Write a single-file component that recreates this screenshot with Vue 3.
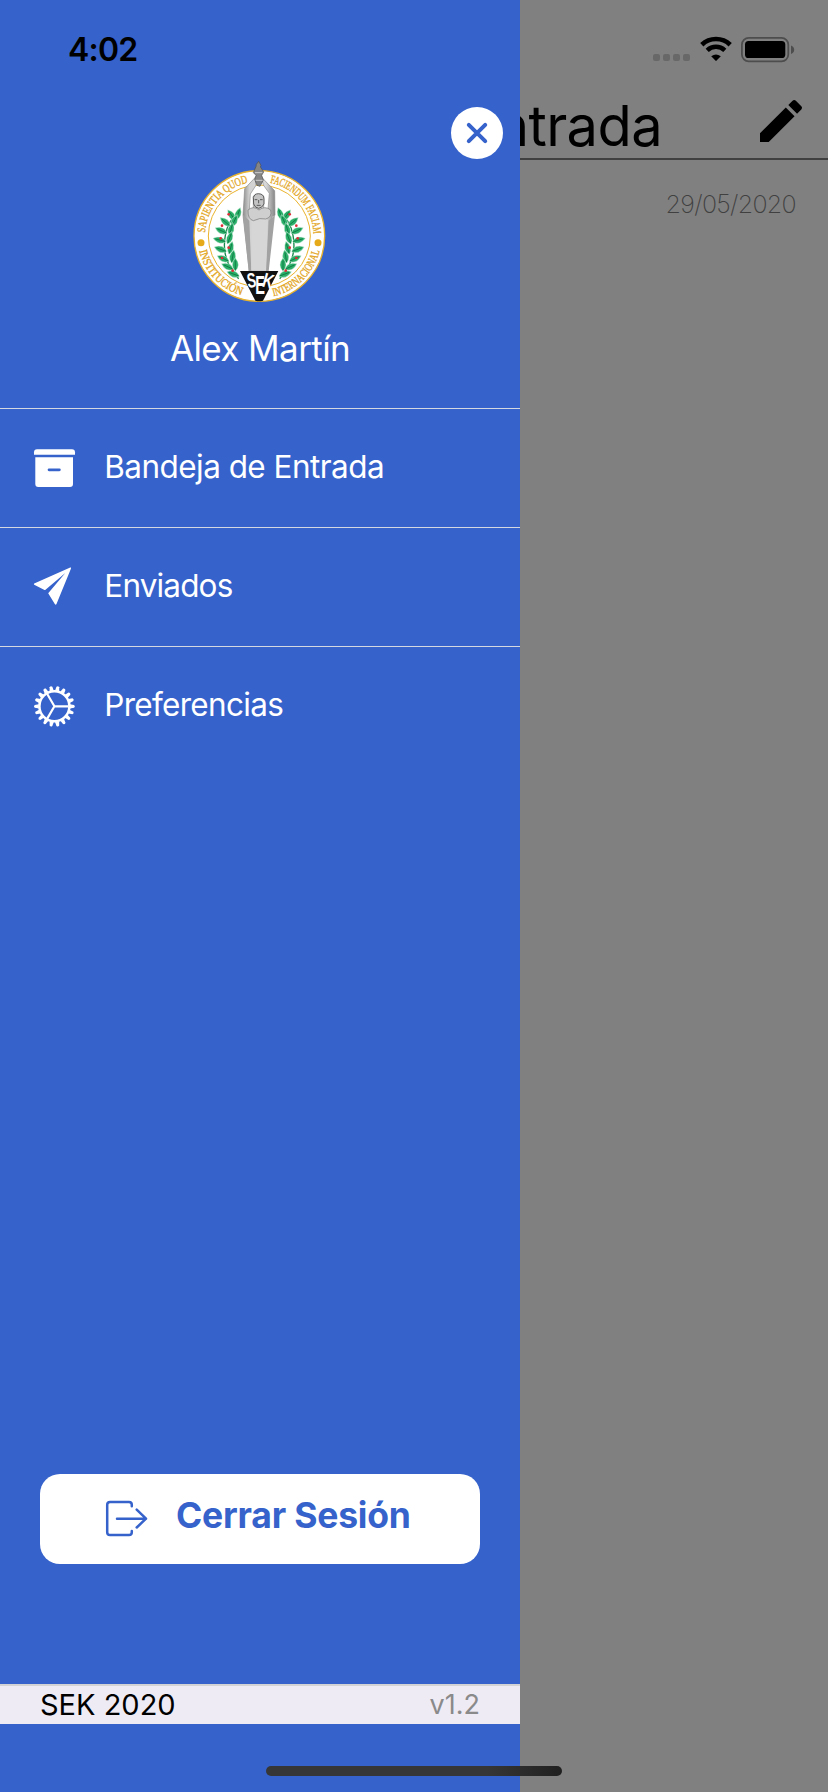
<script setup>
const menu = [
  { id: 'inbox', label: 'Bandeja de Entrada' },
  { id: 'sent', label: 'Enviados' },
  { id: 'settings', label: 'Preferencias' },
]
const teeth = Array.from({ length: 18 }, (_, i) => i * 20)
const leaves = [
  [155, 196, -35], [174, 192, 20], [136, 216, -50], [163, 213, 25], [124, 242, -65], [153, 238, 15],
  [119, 270, -75], [149, 264, 20], [122, 298, -70], [152, 294, 15], [130, 326, -65], [158, 320, 10],
  [143, 350, -65], [166, 344, 0], [160, 372, -70],
]
const berries = [[146, 193], [126, 227], [122, 265], [146, 293], [126, 324], [158, 362]]
</script>

<template>
  <div class="screen">
    <main class="page">
      <div class="status">
        <div class="signal"><i v-for="n in 4" :key="n"></i></div>
        <svg class="wifi" width="32" height="25" viewBox="0 0 32 25">
          <path d="M1.8 7.7 A20.5 20.5 0 0 1 30.2 7.7" fill="none" stroke="#000" stroke-width="4.7" />
          <path d="M7.2 13.4 A12.7 12.7 0 0 1 24.8 13.4" fill="none" stroke="#000" stroke-width="4.5" />
          <path d="M11.2 19.2 Q16 15.6 20.8 19.2 L16.6 23.6 Q16 24.2 15.4 23.6 Z" />
        </svg>
        <svg class="battery" width="54" height="26" viewBox="0 0 54 26">
          <rect x="0.9" y="0.9" width="46.4" height="23.4" rx="6.8" fill="none" stroke="#4d4d4d" stroke-width="1.8" />
          <rect x="4" y="4" width="40.3" height="17" rx="3.6" />
          <path d="M50 8.4 Q53.2 9.7 53.2 12.7 Q53.2 15.7 50 17 Z" fill="#4d4d4d" />
        </svg>
      </div>
      <header class="bar">
        <h1>Bandeja de Entrada</h1>
        <svg class="pencil" width="56" height="56" viewBox="0 0 24 24">
          <path d="M3 17.25V21h3.75L17.81 9.94l-3.75-3.75L3 17.25zM20.71 7.04c.39-.39.39-1.02 0-1.41l-2.34-2.34c-.39-.39-1.02-.39-1.41 0l-1.83 1.83 3.75 3.75 1.83-1.83z" />
        </svg>
      </header>
      <div class="date">29/05/2020</div>
    </main>

    <aside class="drawer">
      <div class="time">4:02</div>
      <button class="close" aria-label="Cerrar">
        <svg width="52" height="52" viewBox="0 0 52 52">
          <path d="M17.8 17.8 L34.2 34.2 M34.2 17.8 L17.8 34.2" stroke="#3562cb" stroke-width="4" stroke-linecap="round" />
        </svg>
      </button>

      <svg class="crest" width="160" height="160" viewBox="0 0 480 480">
        <defs>
          <path id="arc-top" d="M75 258 A163 163 0 0 1 401 258" />
          <path id="arc-bottom" d="M52 258 A186 186 0 0 0 424 258" />
          <linearGradient id="stone" x1="0" x2="1">
            <stop offset="0" stop-color="#8c8c8c" />
            <stop offset="0.2" stop-color="#d2d2d2" />
            <stop offset="0.72" stop-color="#d8d8d8" />
            <stop offset="1" stop-color="#858585" />
          </linearGradient>
          <g id="laurel">
            <path d="M176 386 Q122 330 136 256 Q144 210 180 184" fill="none" stroke="#14894b" stroke-width="4" />
            <g v-for="(l, i) in leaves" :key="i" :transform="`translate(${l[0]} ${l[1]}) rotate(${l[2]}) scale(1.3)`">
              <path d="M0 15 Q-14 2 0 -16 Q14 2 0 15Z" fill="#2aae68" stroke="#e8f5ec" stroke-width="1" />
              <path d="M0 13 V-10" stroke="#0f7a44" stroke-width="2" />
            </g>
            <circle v-for="(b, i) in berries" :key="'b' + i" :cx="b[0]" :cy="b[1]" r="4" fill="#e02a35" />
          </g>
        </defs>
        <circle cx="238" cy="258" r="196" fill="#fff" stroke="#eab32c" stroke-width="4" />
        <circle cx="238" cy="258" r="153" fill="none" stroke="#eab32c" stroke-width="3" />
        <g class="motto">
          <text><textPath href="#arc-top" startOffset="10" textLength="212" lengthAdjust="spacingAndGlyphs">SAPIENTIA QUOD</textPath></text>
          <text><textPath href="#arc-top" startOffset="288" textLength="218" lengthAdjust="spacingAndGlyphs">FACIENDUM FACIAM</textPath></text>
          <text><textPath href="#arc-bottom" startOffset="45" textLength="192" lengthAdjust="spacingAndGlyphs">INSTITUCIÓN</textPath></text>
          <text><textPath href="#arc-bottom" startOffset="335" textLength="204" lengthAdjust="spacingAndGlyphs">INTERNACIONAL</textPath></text>
        </g>
        <circle cx="63" cy="278" r="10.5" fill="#e6aa18" />
        <circle cx="414" cy="278" r="10.5" fill="#e6aa18" />
        <use href="#laurel" />
        <use href="#laurel" transform="translate(475 0) scale(-1 1)" />
        <path d="M226 82 L194 116 L189 196 L208 364 H262 L275 200 L285 196 L284 122 L245 82 L250 105 L268 130 L264 178 L251 180 L251 138 L220 138 L220 180 L208 178 L211 132 L228 106Z" fill="url(#stone)" stroke="#8a8a8a" stroke-width="2" />
        <path d="M189 194 L208 212 L214 364 H206 Z M285 194 L266 212 L258 364 H266 Z" fill="#a2a2a2" />
        <path d="M214 210 Q238 220 264 210 L257 360 H214Z" fill="#d6d6d6" />
        <path d="M204 180 Q220 166 237 180 Q255 166 272 180 Q277 202 257 207 Q240 202 220 212 Q203 208 204 180Z" fill="#cfcfcf" stroke="#747474" stroke-width="2" />
        <path d="M220 142 Q222 131 236 131 Q252 132 252 147 V162 Q246 174 236 175 Q225 174 221 162Z" fill="#c4c4c4" stroke="#444" stroke-width="2.5" />
        <path d="M224 149 h8 M240 149 h8 M236 150 v10 M230 166 h12" stroke="#444" stroke-width="2.5" />
        <path d="M220 68 L226 54 Q229 50 229 43 L236 34 L243 46 Q238 50 246 58 L251 66 L245 76 L250 90 L240 109 L231 106 L224 88 L228 76Z" fill="#858585" stroke="#505050" stroke-width="2" />
        <path d="M225 68 H247 M227 91 H248" stroke="#ccc" stroke-width="3" />
        <path d="M180 363 H295 L249 452 Q237 455 226 452Z" fill="#111" />
        <g class="mark">
          <text x="201" y="413" textLength="27" lengthAdjust="spacingAndGlyphs" transform="rotate(-8 212 390)">S</text>
          <text x="226" y="431" class="tall" textLength="29" lengthAdjust="spacingAndGlyphs">E</text>
          <text x="249" y="413" textLength="32" lengthAdjust="spacingAndGlyphs" transform="rotate(16 260 392)">K</text>
        </g>
      </svg>

      <div class="name">Alex Martín</div>

      <nav>
        <a v-for="item in menu" :key="item.id" class="item">
          <svg width="42" height="42" viewBox="0 0 42 42">
            <g v-if="item.id === 'inbox'" fill="#fff">
              <path d="M1 7.7 V5.2 Q1 2.3 4 2.3 H39 Q42 2.3 42 5.2 V7.7Z" />
              <path fill-rule="evenodd" d="M2.3 10.2 H40 V37 Q40 40 37 40 H5.3 Q2.3 40 2.3 37Z M16 21.5 a1.3 1.3 0 0 0 0 2.7 h10.4 a1.3 1.3 0 0 0 0 -2.7Z" />
            </g>
            <g v-else-if="item.id === 'sent'" fill="#fff">
              <path d="M1.2 17.5 L37.2 1.6 Q38.5 1.1 37.9 2.7 L23.5 38 Q22.7 39.4 21.8 38 L15.2 27.2 L32.3 7.1 L12.5 23.8 Q11.8 24.2 11 23.8 L1.2 18.7 Q0.4 18 1.2 17.5Z" />
            </g>
            <g v-else transform="translate(21.4 21.3)" stroke="#fff" fill="none">
              <circle r="15" stroke-width="2.5" />
              <path v-for="a in teeth" :key="a" :transform="`rotate(${a})`" d="M15.5 -2.1 L19.7 -1.4 Q21.2 0 19.7 1.4 L15.5 2.1Z" fill="#fff" stroke="none" />
              <path d="M0 0 H14 M0 0 L-7.3 -12.6 M0 0 L-7.3 12.6" stroke-width="2.2" />
            </g>
          </svg>
          <span :class="item.id">{{ item.label }}</span>
        </a>
      </nav>

      <button class="logout">
        <svg width="44" height="38" viewBox="0 0 44 38" fill="none" stroke="#3562cb" stroke-width="2.5" stroke-linecap="round" stroke-linejoin="round">
          <path d="M26.8 6.3 V4.8 Q26.8 2 24 2 H5 Q2.2 2 2.2 4.8 V32.2 Q2.2 35 5 35 H24 Q26.8 35 26.8 32.2 V31" />
          <path d="M12 18.7 H41 M31.7 9.6 L41 18.7 L31.7 27.5" />
        </svg>
        <span>Cerrar Sesión</span>
      </button>

      <footer>
        <span class="brand">SEK 2020</span>
        <span class="version">v1.2</span>
      </footer>
    </aside>
    <div class="home"></div>
  </div>
</template>

<style>
html, body { margin: 0; background: #808080; }
</style>

<style scoped>
.screen { position: relative; width: 828px; height: 1792px; overflow: hidden; background: #808080; font-family: Inter, "Liberation Sans", sans-serif; color: #000; }
.screen * { box-sizing: border-box; }
svg { display: block; flex: none; overflow: visible; }
.status { height: 88px; padding: 37px 33px 0 0; display: flex; justify-content: flex-end; align-items: flex-start; }
.signal { display: flex; gap: 3px; margin: 17px 9.5px 0 0; }
.signal i { width: 7px; height: 7px; border-radius: 2px; background: #686868; }
.wifi { margin-right: 9.5px; }
.bar { height: 72px; border-bottom: 2px solid #404040; display: flex; align-items: flex-start; justify-content: flex-end; padding: 5px 19px 0 0; }
h1 { margin: 0 91px 0 0; font-size: 56px; line-height: 66px; font-weight: 400; letter-spacing: -0.6px; white-space: nowrap; }
.date { padding: 29px 32px 0 0; text-align: right; font-size: 25px; line-height: 31px; font-weight: 200; color: #404040; letter-spacing: -0.7px; }
.drawer { position: absolute; left: 0; top: 0; width: 520px; height: 1792px; background: #3562cb; display: flex; flex-direction: column; }
.time { height: 107px; padding: 30px 0 0 68px; font-size: 32px; line-height: 40px; font-weight: 600; letter-spacing: -0.8px; }
button { border: 0; padding: 0; font: inherit; }
.close { align-self: flex-end; margin-right: 17px; width: 52px; height: 52px; border-radius: 50%; background: #fff; }
.crest { margin: -9px 0 0 180px; }
.motto { font-family: "Liberation Serif", serif; font-size: 35px; fill: #e3a51c; stroke: #e3a51c; stroke-width: 1px; }
.mark { font-family: "Liberation Sans", sans-serif; font-weight: 700; font-size: 62px; fill: #fff; }
.mark .tall { font-size: 76px; }
.name { height: 98px; padding-top: 18px; text-align: center; font-size: 35px; line-height: 40px; color: #fff; letter-spacing: -0.6px; }
.item { display: flex; align-items: flex-start; height: 119px; border-top: 1px solid #d4d8e0; padding: 38px 0 0 33px; color: #fff; font-size: 31.5px; }
.item span { line-height: 40px; margin-left: 29.3px; white-space: nowrap; }
.item .inbox { letter-spacing: -0.55px; }
.item .sent { letter-spacing: -0.85px; }
.item .settings { letter-spacing: -0.7px; }
.logout { margin: 709px 40px 0; height: 90px; flex: none; border-radius: 20px; background: #fff; color: #3562cb; display: flex; align-items: flex-start; padding: 26px 0 0 65px; }
.logout span { margin-left: 27px; font-size: 35.5px; line-height: 32px; font-weight: 700; letter-spacing: -0.2px; white-space: nowrap; }
footer { margin-top: 120px; height: 40px; flex: none; border-top: 2px solid #d3d3d6; background: #efebf5; display: flex; justify-content: space-between; padding: 0 40px; line-height: 37px; }
.brand { font-size: 29px; }
.version { font-size: 27px; color: #8a8a8a; }
.home { position: absolute; left: 266px; top: 1766px; width: 296px; height: 10px; border-radius: 5px; background: linear-gradient(90deg, #363636 75%, #202020 100%); }
</style>
